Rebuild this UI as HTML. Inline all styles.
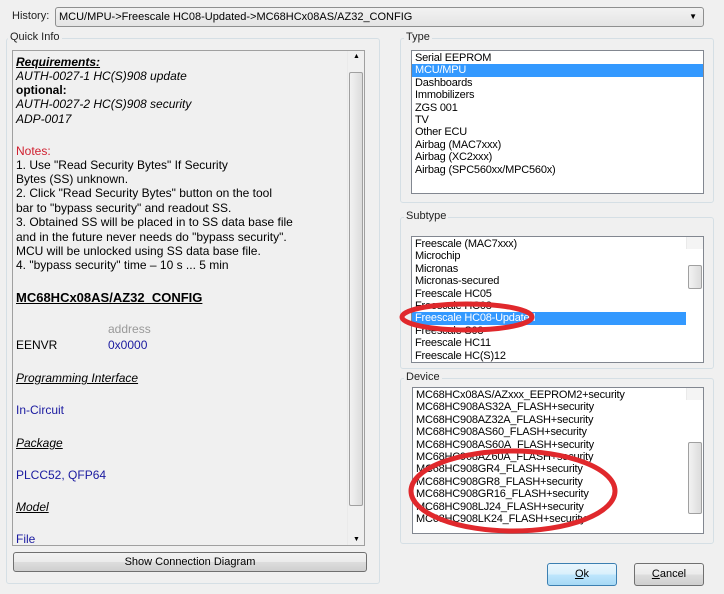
<!DOCTYPE html>
<html><head><style>
*{margin:0;padding:0;box-sizing:border-box}
body{width:724px;height:594px;background:#f0f0f0;position:relative;overflow:hidden;font-family:"Liberation Sans",sans-serif;font-size:11px;color:#000}
.a{position:absolute}
.grp{position:absolute;border:1px solid #d5dfe5;border-radius:3px}
.lbl{position:absolute;background:#f0f0f0;padding:0 2px;font-size:11px;color:#222}
.list{position:absolute;background:#fff;border:1px solid #828790;overflow:hidden}
.list div{height:12.4px;line-height:12.4px;padding-left:3px;white-space:nowrap;font-size:11px;letter-spacing:-0.2px}
.sel{background:#3399ff;color:#fff}
.sb{position:absolute;right:0;top:0;bottom:0;width:17px;background:#f4f4f4;border-left:1px solid #eaeaea}
.thumb{position:absolute;left:1px;right:1px;background:linear-gradient(90deg,#f2f2f2,#dcdcdc);border:1px solid #a0a0a0;border-radius:2px}
.btn{position:absolute;border:1px solid #707070;border-radius:3px;background:linear-gradient(#f2f2f2,#ebebeb 50%,#dddddd 51%,#cfcfcf);text-align:center;font-size:11px}
.t{position:absolute;left:17px;font-size:12px;white-space:nowrap}
.b{color:#1a1aa0}
</style></head><body>
<div class="a" style="left:12px;top:10px;font-size:11px;color:#222">History:</div>
<div class="a" style="left:55px;top:7px;width:649px;height:20px;border:1px solid #8e8f8f;border-radius:3px;background:linear-gradient(#f2f2f2,#e4e4e4);font-size:11px;line-height:18px;padding-left:3px">MCU/MPU-&gt;Freescale HC08-Updated-&gt;MC68HCx08AS/AZ32_CONFIG<span style="position:absolute;right:6px;top:0;font-size:8px">▼</span></div>

<div class="grp" style="left:6px;top:38px;width:374px;height:546px"></div>
<div class="lbl" style="left:8px;top:31px">Quick Info</div>
<div class="a" style="left:12px;top:50px;width:353px;height:496px;border:1px solid #a0a0a0;background:#f0f0f0;overflow:hidden">
 <div class="sb" style="width:17px;background:#f0f0f0"><div class="thumb" style="top:21px;height:434px"></div><div class="a" style="top:2px;left:5px;font-size:7px">▲</div><div class="a" style="bottom:2px;left:5px;font-size:7px">▼</div></div>
</div>
<div class="a" style="left:12px;top:50px;width:335px;height:495px;overflow:hidden">
<div class="t" style="left:4px;top:5px;font-weight:bold;font-style:italic;text-decoration:underline">Requirements:</div>
<div class="t" style="left:4px;top:19px;font-style:italic">AUTH-0027-1 HC(S)908 update</div>
<div class="t" style="left:4px;top:33px;font-weight:bold">optional:</div>
<div class="t" style="left:4px;top:47px;font-style:italic">AUTH-0027-2 HC(S)908 security</div>
<div class="t" style="left:4px;top:62px;font-style:italic">ADP-0017</div>
<div class="t" style="left:4px;top:94px;color:#d02030">Notes:</div>
<div class="t" style="left:4px;top:108px">1. Use "Read Security Bytes" If Security</div>
<div class="t" style="left:4px;top:122px">Bytes (SS) unknown.</div>
<div class="t" style="left:4px;top:136px">2. Click "Read Security Bytes" button on the tool</div>
<div class="t" style="left:4px;top:151px">bar to "bypass security" and readout SS.</div>
<div class="t" style="left:4px;top:165px">3. Obtained SS will be placed in to SS data base file</div>
<div class="t" style="left:4px;top:180px">and in the future never needs do "bypass security".</div>
<div class="t" style="left:4px;top:194px">MCU will be unlocked using SS data base file.</div>
<div class="t" style="left:4px;top:208px">4. "bypass security" time – 10 s ... 5 min</div>
<div class="t" style="left:4px;top:240px;font-weight:bold;font-size:13px;text-decoration:underline">MC68HCx08AS/AZ32_CONFIG</div>
<div class="t" style="left:96px;top:272px;color:#999">address</div>
<div class="t" style="left:4px;top:288px">EENVR</div>
<div class="t b" style="left:96px;top:288px">0x0000</div>
<div class="t" style="left:4px;top:321px;font-style:italic;text-decoration:underline">Programming Interface</div>
<div class="t b" style="left:4px;top:353px">In-Circuit</div>
<div class="t" style="left:4px;top:386px;font-style:italic;text-decoration:underline">Package</div>
<div class="t b" style="left:4px;top:418px">PLCC52, QFP64</div>
<div class="t" style="left:4px;top:450px;font-style:italic;text-decoration:underline">Model</div>
<div class="t b" style="left:4px;top:482px">File</div>
</div>
<div class="btn" style="left:13px;top:552px;width:354px;height:20px;line-height:18px">Show Connection Diagram</div>

<div class="grp" style="left:400px;top:38px;width:314px;height:165px"></div>
<div class="lbl" style="left:404px;top:31px">Type</div>
<div class="list" style="left:411px;top:50px;width:293px;height:144px;padding-top:1px">
<div>Serial EEPROM</div><div class="sel">MCU/MPU</div><div>Dashboards</div><div>Immobilizers</div><div>ZGS 001</div><div>TV</div><div>Other ECU</div><div>Airbag (MAC7xxx)</div><div>Airbag (XC2xxx)</div><div>Airbag (SPC560xx/MPC560x)</div>
</div>

<div class="grp" style="left:400px;top:217px;width:314px;height:152px"></div>
<div class="lbl" style="left:404px;top:210px">Subtype</div>
<div class="list" style="left:411px;top:236px;width:293px;height:127px;padding-top:1px">
<div>Freescale (MAC7xxx)</div><div>Microchip</div><div>Micronas</div><div>Micronas-secured</div><div>Freescale HC05</div><div>Freescale HC08</div><div class="sel" style="margin-right:17px">Freescale HC08-Updated</div><div>Freescale S08</div><div>Freescale HC11</div><div>Freescale HC(S)12</div>
<div class="sb"><div class="thumb" style="top:28px;height:24px"></div></div>
</div>

<div class="grp" style="left:400px;top:378px;width:314px;height:166px"></div>
<div class="lbl" style="left:404px;top:371px">Device</div>
<div class="list" style="left:412px;top:387px;width:292px;height:147px;padding-top:1px">
<div>MC68HCx08AS/AZxxx_EEPROM2+security</div><div>MC68HC908AS32A_FLASH+security</div><div>MC68HC908AZ32A_FLASH+security</div><div>MC68HC908AS60_FLASH+security</div><div>MC68HC908AS60A_FLASH+security</div><div>MC68HC908AZ60A_FLASH+security</div><div>MC68HC908GR4_FLASH+security</div><div>MC68HC908GR8_FLASH+security</div><div>MC68HC908GR16_FLASH+security</div><div>MC68HC908LJ24_FLASH+security</div><div>MC68HC908LK24_FLASH+security</div>
<div class="sb"><div class="thumb" style="top:54px;height:72px"></div></div>
</div>

<svg class="a" style="left:0;top:0" width="724" height="594">
<ellipse cx="467" cy="317" rx="65" ry="13" fill="none" stroke="#e0282c" stroke-width="5"/>
<ellipse cx="513" cy="491" rx="102" ry="40" fill="none" stroke="#e0282c" stroke-width="5"/>
</svg>

<div class="btn" style="left:547px;top:563px;width:70px;height:23px;line-height:21px;border-color:#3c7fb1;background:linear-gradient(#eaf6fd,#d9f0fc 50%,#bee6fd 51%,#a7d9f5)"><u>O</u>k</div>
<div class="btn" style="left:634px;top:563px;width:70px;height:23px;line-height:21px"><u>C</u>ancel</div>
</body></html>
